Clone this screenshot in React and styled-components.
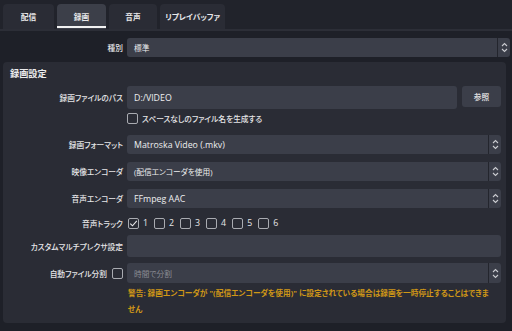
import React from "react";
import styled, { createGlobalStyle } from "styled-components";

const GlobalStyle = createGlobalStyle`
  html, body { margin: 0; padding: 0; background: #1f2129; }
  body {
    font-family: "Open Sans", "Noto Sans CJK JP", sans-serif;
    font-size: 7.7px;
    color: #e6e6e8;
    font-feature-settings: "palt";
  }
  * { box-sizing: border-box; }
`;

const Root = styled.div`
  width: 512px;
  height: 331px;
  background: #1f2129;
  overflow: hidden;
  display: flex;
  flex-direction: column;
`;

const Latin = styled.span`
  font-size: 8.8px;
`;

const TabBar = styled.div`
  height: 29px;
  display: flex;
  align-items: flex-end;
  gap: 3px;
  padding-left: 3px;
  background: #21232b;
`;

const Tab = styled.div`
  position: relative;
  width: ${(p) => p.$w}px;
  height: 25px;
  display: flex;
  align-items: center;
  justify-content: center;
  border-radius: 4px 4px 0 0;
  background: ${(p) => (p.$active ? "#3c3f49" : "#2a2c35")};
  color: #e8e8ea;
  font-weight: 700;
  &::after {
    content: "";
    display: ${(p) => (p.$active ? "block" : "none")};
    position: absolute;
    left: 0;
    right: 0;
    bottom: 1px;
    height: 2px;
    background: #f2f2f2;
  }
`;

const Pane = styled.div`
  flex: 1;
  border-top: 2px solid #2c2e37;
  background: #1e2028;
  padding-top: 7px;
  display: flex;
  flex-direction: column;
`;

const FormRow = styled.div`
  display: grid;
  grid-template-columns: 120px 1fr;
  column-gap: 4px;
  align-items: center;
  height: ${(p) => p.$h}px;
  margin-top: ${(p) => p.$mt || 0}px;
  padding-left: ${(p) => p.$pl || 0}px;
  padding-right: ${(p) => p.$pr || 0}px;
`;

const Label = styled.div`
  text-align: right;
  white-space: nowrap;
  color: #e6e6e8;
  font-weight: 500;
`;

const LabelWithCheck = styled.div`
  display: flex;
  align-items: center;
  justify-content: flex-end;
  gap: 5px;
  white-space: nowrap;
  font-weight: 500;
`;

const Field = styled.div`
  display: flex;
  align-items: stretch;
  gap: 5px;
  height: 100%;
  min-width: 0;
`;

const Input = styled.div`
  flex: 1;
  display: flex;
  align-items: center;
  padding-left: 7px;
  background: #3b3e49;
  border-radius: 3px;
  color: #eeeeef;
  white-space: nowrap;
`;

const ComboBox = styled.div`
  flex: 1;
  display: flex;
  align-items: stretch;
  background: #3b3e49;
  border-radius: 3px;
  overflow: hidden;
`;

const ComboText = styled.div`
  flex: 1;
  display: flex;
  align-items: center;
  padding-left: 7px;
  color: ${(p) => (p.$disabled ? "#8b8d94" : "#eeeeef")};
  white-space: nowrap;
`;

const ComboArrow = styled.div`
  width: 13px;
  display: flex;
  align-items: center;
  justify-content: center;
  border-left: 1px solid #23252d;
`;

const Button = styled.div`
  width: 39px;
  height: 21px;
  display: flex;
  align-items: center;
  justify-content: center;
  background: #3b3e49;
  border-radius: 3px;
  color: #d8d8da;
  font-weight: 700;
`;

const Group = styled.div`
  margin: 5px 6px 0 3px;
  height: 261px;
  background: #2a2c35;
  border-radius: 4px;
  padding: 5px 5px 0 0;
  display: flex;
  flex-direction: column;
`;

const GroupTitle = styled.div`
  height: 12px;
  display: flex;
  align-items: center;
  padding-left: 7px;
  font-size: 9.2px;
  font-weight: 700;
  color: #ececee;
`;

const CheckWrap = styled.div`
  display: flex;
  align-items: center;
  gap: 4px;
  color: #e6e6e8;
  font-weight: 500;
`;

const Box = styled.div`
  width: 11px;
  height: 11px;
  border: 1px solid #a9abb1;
  border-radius: 2px;
  display: flex;
  align-items: center;
  justify-content: center;
`;

const TrackList = styled.div`
  display: flex;
  align-items: center;
  gap: 6px;
  padding-left: 1px;
`;

const Warning = styled.div`
  margin-top: 2px;
  padding-left: 125px;
  line-height: 16px;
  color: #cf9717;
  font-weight: 700;
  white-space: nowrap;
`;

const Chevrons = () => (
  <svg width="7" height="11" viewBox="0 0 7 11" fill="none">
    <path d="M1 4 L3.5 1.5 L6 4" stroke="#c9cacf" strokeWidth="1.1" />
    <path d="M1 7 L3.5 9.5 L6 7" stroke="#c9cacf" strokeWidth="1.1" />
  </svg>
);

const Check = () => (
  <svg width="9" height="9" viewBox="0 0 9 9" fill="none">
    <path d="M1.3 4.6 L3.5 6.8 L7.8 1.8" stroke="#e8e8ea" strokeWidth="1.1" />
  </svg>
);

const Checkbox = ({ checked, children }) => (
  <CheckWrap>
    <Box>{checked && <Check />}</Box>
    {children}
  </CheckWrap>
);

const Combo = ({ children, disabled }) => (
  <ComboBox>
    <ComboText $disabled={disabled}>{children}</ComboText>
    <ComboArrow>
      <Chevrons />
    </ComboArrow>
  </ComboBox>
);

export default function App() {
  const tabs = [
    { t: "配信", w: 51 },
    { t: "録画", w: 49, active: true },
    { t: "音声", w: 48 },
    { t: "リプレイバッファ", w: 65 },
  ];
  return (
    <Root>
      <GlobalStyle />
      <TabBar>
        {tabs.map((x) => (
          <Tab key={x.t} $w={x.w} $active={x.active}>
            {x.t}
          </Tab>
        ))}
      </TabBar>
      <Pane>
        <FormRow $h={19} $pl={3} $pr={2}>
          <Label>種別</Label>
          <Field>
            <Combo>標準</Combo>
          </Field>
        </FormRow>
        <Group>
          <GroupTitle>録画設定</GroupTitle>
          <FormRow $h={23} $mt={7}>
            <Label>録画ファイルのパス</Label>
            <Field>
              <Input>
                <Latin>D:/VIDEO</Latin>
              </Input>
              <Button>参照</Button>
            </Field>
          </FormRow>
          <FormRow $h={16} $mt={1}>
            <div />
            <Checkbox>
              <span>スペースなしのファイル名を生成する</span>
            </Checkbox>
          </FormRow>
          <FormRow $h={19} $mt={9}>
            <Label>録画フォーマット</Label>
            <Field>
              <Combo>
                <Latin>Matroska Video (.mkv)</Latin>
              </Combo>
            </Field>
          </FormRow>
          <FormRow $h={19} $mt={8}>
            <Label>映像エンコーダ</Label>
            <Field>
              <Combo>(配信エンコーダを使用)</Combo>
            </Field>
          </FormRow>
          <FormRow $h={19} $mt={8}>
            <Label>音声エンコーダ</Label>
            <Field>
              <Combo>
                <Latin>FFmpeg AAC</Latin>
              </Combo>
            </Field>
          </FormRow>
          <FormRow $h={16} $mt={7}>
            <Label>音声トラック</Label>
            <TrackList>
              {[1, 2, 3, 4, 5, 6].map((n) => (
                <Checkbox key={n} checked={n === 1}>
                  <Latin>{n}</Latin>
                </Checkbox>
              ))}
            </TrackList>
          </FormRow>
          <FormRow $h={22} $mt={4}>
            <Label>カスタムマルチプレクサ設定</Label>
            <Field>
              <Input />
            </Field>
          </FormRow>
          <FormRow $h={20} $mt={6}>
            <LabelWithCheck>
              <span>自動ファイル分割</span>
              <Box />
            </LabelWithCheck>
            <Field>
              <Combo disabled>時間で分割</Combo>
            </Field>
          </FormRow>
          <Warning>
            警告: 録画エンコーダが "(配信エンコーダを使用)" に設定されている場合は録画を一時停止することはできま
            <br />
            せん
          </Warning>
        </Group>
      </Pane>
    </Root>
  );
}
